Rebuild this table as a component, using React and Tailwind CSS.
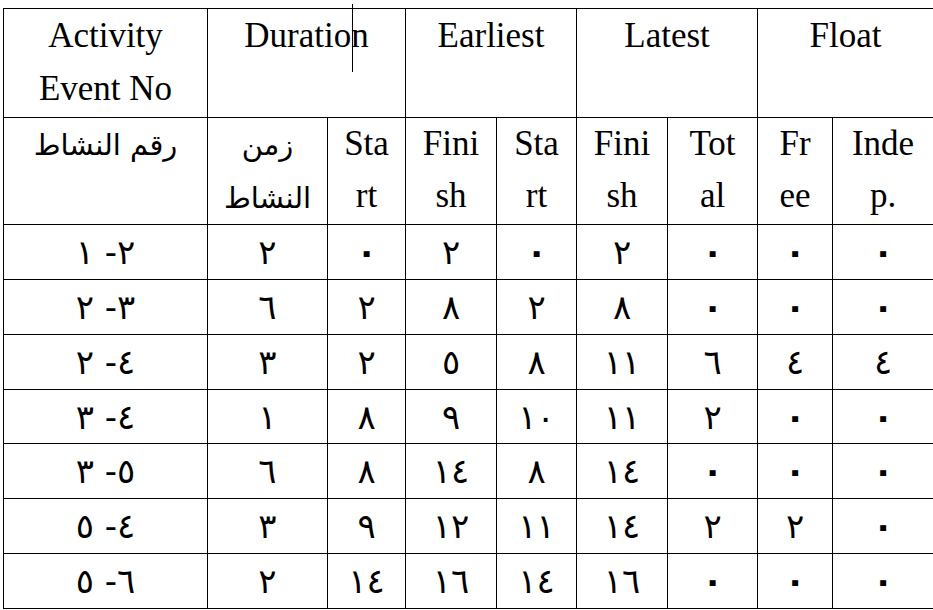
import React from "react";

const rows = [
  ["٢- ١", "٢", "٠", "٢", "٠", "٢", "٠", "٠", "٠"],
  ["٣- ٢", "٦", "٢", "٨", "٢", "٨", "٠", "٠", "٠"],
  ["٤- ٢", "٣", "٢", "٥", "٨", "١١", "٦", "٤", "٤"],
  ["٤- ٣", "١", "٨", "٩", "١٠", "١١", "٢", "٠", "٠"],
  ["٥- ٣", "٦", "٨", "١٤", "٨", "١٤", "٠", "٠", "٠"],
  ["٤- ٥", "٣", "٩", "١٢", "١١", "١٤", "٢", "٢", "٠"],
  ["٦- ٥", "٢", "١٤", "١٦", "١٤", "١٦", "٠", "٠", "٠"],
];

const rowHeights = ["h-[55px]", "h-[55px]", "h-[55px]", "h-[54px]", "h-[55px]", "h-[55px]", "h-[55px]"];

const cell = "border border-black p-0 text-center";
const head = cell + " align-top text-[35px] font-normal";

export default function App() {
  return (
    <div className="relative w-[933px] h-[610px] bg-white pt-[8px] pl-[3px] [font-family:'Liberation_Serif',serif] text-black overflow-hidden">
      {/* text caret left in the Duration cell */}
      <div className="absolute left-[352px] top-[4px] w-px h-[68px] bg-black" />

      <table className="table-fixed border-collapse w-[930px]">
        <colgroup>
          <col className="w-[204px]" />
          <col className="w-[120px]" />
          <col className="w-[78px]" />
          <col className="w-[91px]" />
          <col className="w-[80px]" />
          <col className="w-[91px]" />
          <col className="w-[90px]" />
          <col className="w-[75px]" />
          <col className="w-[101px]" />
        </colgroup>
        <thead>
          <tr className="h-[109px] leading-[53px]">
            <th className={head}>
              Activity
              <br />
              Event No
            </th>
            <th colSpan={2} className={head}>Duration</th>
            <th colSpan={2} className={head}>Earliest</th>
            <th colSpan={2} className={head}>Latest</th>
            <th colSpan={2} className={head}>Float</th>
          </tr>
          <tr className="h-[106px] leading-[52px]">
            <th className={head} dir="rtl">
              <span className="text-[29px] [font-family:'DejaVu_Sans',sans-serif]">رقم النشاط</span>
            </th>
            <th className={head} dir="rtl">
              <span className="text-[29px] [font-family:'DejaVu_Sans',sans-serif]">
                زمن
                <br />
                النشاط
              </span>
            </th>
            <th className={head}>Sta<br />rt</th>
            <th className={head}>Fini<br />sh</th>
            <th className={head}>Sta<br />rt</th>
            <th className={head}>Fini<br />sh</th>
            <th className={head}>Tot<br />al</th>
            <th className={head}>Fr<br />ee</th>
            <th className={head}>Inde<br />p.</th>
          </tr>
        </thead>
        <tbody>
          {rows.map((r, i) => (
            <tr key={i} className={rowHeights[i]}>
              {r.map((v, j) => (
                <td
                  key={j}
                  dir={j === 0 ? "rtl" : undefined}
                  className={
                    cell +
                    " align-middle text-[34px] leading-none [font-family:'DejaVu_Sans',sans-serif] " +
                    (v === "٠" ? "font-bold" : "font-normal")
                  }
                >
                  {v}
                </td>
              ))}
            </tr>
          ))}
        </tbody>
      </table>
    </div>
  );
}
